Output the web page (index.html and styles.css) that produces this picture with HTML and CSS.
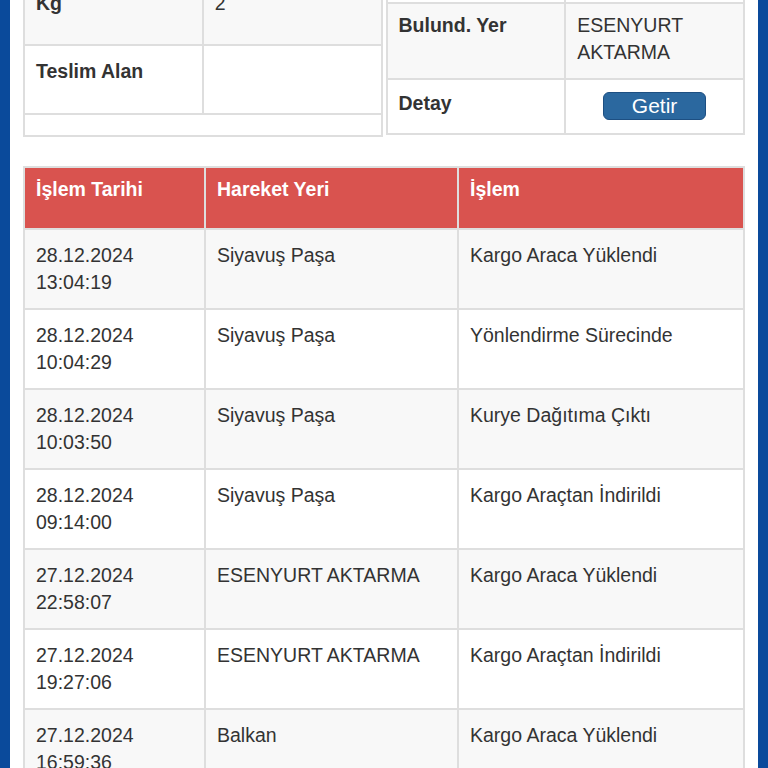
FILE: index.html
```html
<!DOCTYPE html>
<html lang="tr">
<head>
<meta charset="utf-8">
<title>Kargo Takip</title>
<link rel="stylesheet" href="styles.css">
</head>
<body>
<div class="page">
  <div class="content">
    <div class="info">
      <table class="tbl info-tbl">
        <tr class="striped">
          <th class="kg-cell">Kg</th>
          <td class="kg-cell">2</td>
        </tr>
        <tr>
          <th class="teslim-cell">Teslim Alan</th>
          <td class="teslim-cell"></td>
        </tr>
        <tr>
          <td class="spacer" colspan="2"></td>
        </tr>
      </table>
      <table class="tbl info-tbl">
        <tr>
          <th class="prev-cell"></th>
          <td class="prev-cell"></td>
        </tr>
        <tr class="striped">
          <th class="yer-cell">Bulund. Yer</th>
          <td class="yer-cell">ESENYURT AKTARMA</td>
        </tr>
        <tr>
          <th class="detay-cell">Detay</th>
          <td class="btn-cell"><button class="getir" type="button">Getir</button></td>
        </tr>
      </table>
    </div>

    <table class="tbl moves">
      <colgroup>
        <col class="c1">
        <col class="c2">
        <col class="c3">
      </colgroup>
      <thead>
        <tr>
          <th>İşlem Tarihi</th>
          <th>Hareket Yeri</th>
          <th>İşlem</th>
        </tr>
      </thead>
      <tbody>
        <tr class="striped"><td>28.12.2024<br>13:04:19</td><td>Siyavuş Paşa</td><td>Kargo Araca Yüklendi</td></tr>
        <tr><td>28.12.2024<br>10:04:29</td><td>Siyavuş Paşa</td><td>Yönlendirme Sürecinde</td></tr>
        <tr class="striped"><td>28.12.2024<br>10:03:50</td><td>Siyavuş Paşa</td><td>Kurye Dağıtıma Çıktı</td></tr>
        <tr><td>28.12.2024<br>09:14:00</td><td>Siyavuş Paşa</td><td>Kargo Araçtan İndirildi</td></tr>
        <tr class="striped"><td>27.12.2024<br>22:58:07</td><td>ESENYURT AKTARMA</td><td>Kargo Araca Yüklendi</td></tr>
        <tr><td>27.12.2024<br>19:27:06</td><td>ESENYURT AKTARMA</td><td>Kargo Araçtan İndirildi</td></tr>
        <tr class="striped"><td>27.12.2024<br>16:59:36</td><td>Balkan</td><td>Kargo Araca Yüklendi</td></tr>
      </tbody>
    </table>
  </div>
</div>
</body>
</html>
```
FILE: styles.css
```css
html, body {
  margin: 0;
  padding: 0;
  background: #ffffff;
}

body {
  font-family: "Liberation Sans", Arial, Helvetica, sans-serif;
  font-size: 19.5px;
  line-height: 27px;
  color: #333333;
  overflow: hidden;
}

.page {
  border-left: 10px solid #0a4a9b;
  border-right: 10px solid #0a4a9b;
  height: 768px;
  overflow: hidden;
  padding: 0 13px;
  box-sizing: border-box;
}

.content {
  margin-top: -26px;
}

.info {
  display: flex;
  gap: 3px;
  align-items: flex-start;
}

.tbl {
  border-collapse: collapse;
  table-layout: fixed;
}

.tbl th,
.tbl td {
  border: 2px solid #dedede;
  text-align: left;
  vertical-align: top;
  padding: 0 11px;
  box-sizing: border-box;
}

.tbl th {
  font-weight: bold;
}

.tbl td {
  font-weight: normal;
}

.striped th,
.striped td {
  background: #f8f8f8;
}

.info-tbl {
  flex: 1 1 0;
  width: 0;
}

.kg-cell {
  padding-top: 14px !important;
  padding-bottom: 27px !important;
}

.teslim-cell {
  padding-top: 12px !important;
  padding-bottom: 28px !important;
  height: 69px;
}

.spacer {
  height: 22px;
  padding: 0 !important;
}

.prev-cell {
  height: 28px;
}

.yer-cell {
  padding-top: 8px !important;
  padding-bottom: 12px !important;
}

.detay-cell {
  padding-top: 10px !important;
  padding-bottom: 16px !important;
}

.btn-cell {
  padding-top: 12px !important;
  padding-bottom: 12px !important;
  line-height: 0;
}

.getir {
  display: block;
  margin: 0 auto;
  width: 103px;
  height: 28px;
  box-sizing: border-box;
  border: 1px solid #1d4f82;
  border-radius: 6px;
  background: #2b689f;
  color: #ffffff;
  font-family: "Liberation Sans", Arial, Helvetica, sans-serif;
  font-size: 21px;
  line-height: 26px;
  padding: 0;
}

.moves {
  width: 100%;
  margin-top: 29px;
}

.c1 { width: 181px; }
.c2 { width: 253px; }

.moves thead th {
  background: #d9534f;
  color: #ffffff;
  padding-top: 8px;
  padding-bottom: 25px;
}

.moves tbody td {
  padding-top: 12px;
  padding-bottom: 12px;
}
```
